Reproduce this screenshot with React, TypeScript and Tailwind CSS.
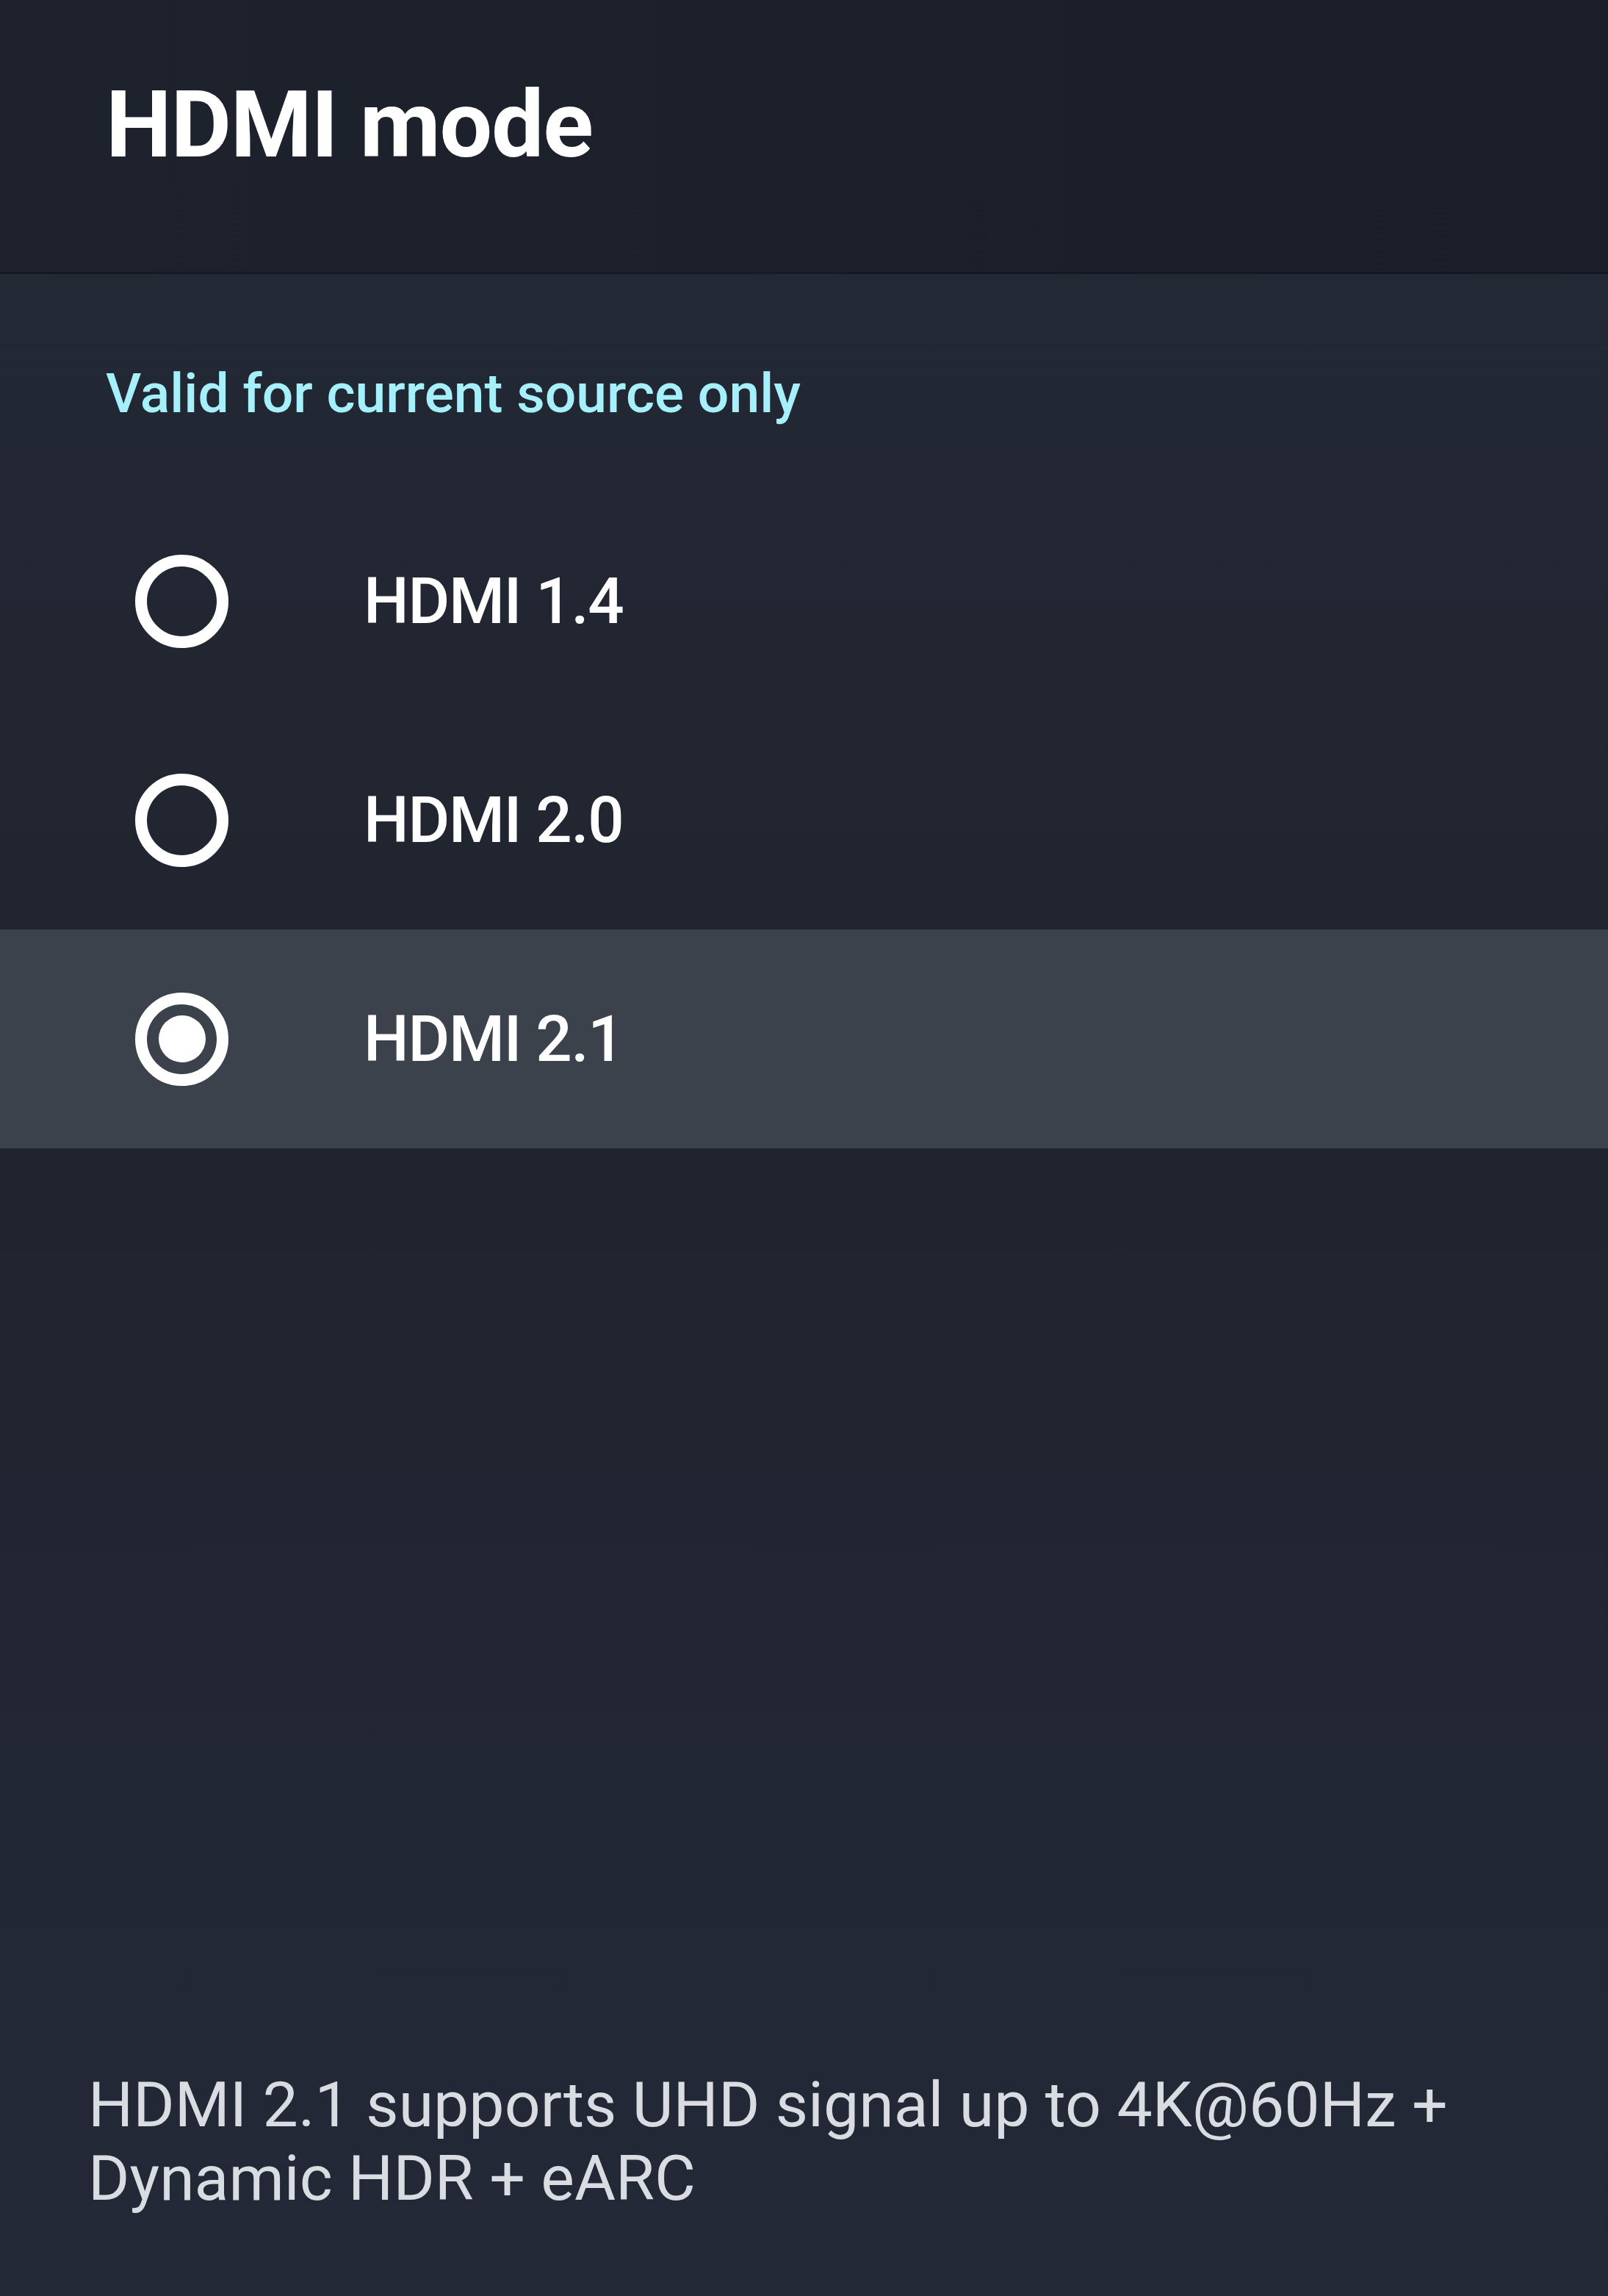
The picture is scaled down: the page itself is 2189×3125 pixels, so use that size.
import React, { useState } from 'react';

type Option = { id: string; label: string };

const options: Option[] = [
    { id: '1.4', label: 'HDMI 1.4' },
    { id: '2.0', label: 'HDMI 2.0' },
    { id: '2.1', label: 'HDMI 2.1' },
];

const Radio: React.FC<{ checked: boolean }> = ({ checked }) => (
    <div className="w-[127px] h-[127px] rounded-full border-[16px] border-white flex items-center justify-center shrink-0">
        {checked && <div className="w-[64px] h-[64px] rounded-full bg-white" />}
    </div>
);

export default function App() {
    const [selected, setSelected] = useState('2.1');

    return (
        <div className="h-screen w-full flex flex-col bg-gradient-to-b from-[#242a36] via-[#1f242e] to-[#232937] font-['Roboto','Liberation_Sans',sans-serif] overflow-hidden">
            {/* Header */}
            <div className="h-[373px] shrink-0 bg-gradient-to-r from-[#1d222d] to-[#1a1e28] border-b-[3px] border-[#151922] pt-[106px] pl-[144px]">
                <h1 className="text-[127px] leading-none font-bold text-white tracking-[-0.01em]">HDMI mode</h1>
            </div>

            {/* Hint */}
            <p className="mt-[125px] pl-[144px] text-[75px] leading-none font-medium text-[#a6f0fb]">
                Valid for current source only
            </p>

            {/* Options */}
            <div className="mt-[96px] flex flex-col">
                {options.map(opt => {
                    const active = opt.id === selected;
                    return (
                        <button
                            key={opt.id}
                            onClick={() => setSelected(opt.id)}
                            className={`h-[298px] w-full flex items-center pl-[184px] text-left ${active ? 'bg-[#3c424b]' : ''}`}
                        >
                            <Radio checked={active} />
                            <span className="ml-[184px] text-[87px] leading-none font-medium text-white tracking-[-0.015em]">
                                {opt.label}
                            </span>
                        </button>
                    );
                })}
            </div>

            {/* Description */}
            <p className="mt-auto pb-[110px] pl-[120px] pr-[120px] text-[86px] leading-[100px] text-[#d9dce0]">
                HDMI 2.1 supports UHD signal up to 4K@60Hz + Dynamic HDR + eARC
            </p>
        </div>
    );
}
